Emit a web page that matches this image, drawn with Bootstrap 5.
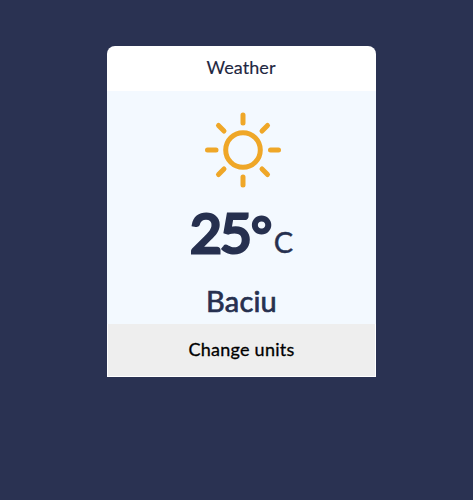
<!DOCTYPE html>
<html lang="en">
<head>
<meta charset="utf-8">
<meta name="viewport" content="width=device-width, initial-scale=1">
<title>Weather</title>
<link href="https://cdn.jsdelivr.net/npm/bootstrap@5.3.0/dist/css/bootstrap.min.css" rel="stylesheet">
<style>
body{background:#2a3252;color:#26304f;font-family:Lato,"Open Sans",sans-serif;min-height:100vh;overflow:hidden}
.weather-card{width:269px;height:331px;margin:46px 0 0 107px;--bs-card-bg:#fff;border-radius:8px 8px 0 0}
.weather-head{height:45px;padding-right:1px;font-size:18px;line-height:43px;letter-spacing:.08px;color:#1f2741;-webkit-text-stroke:.15px #1f2741}
.weather-body{height:233px;background:#f3f9ff}
.sun{width:78px;height:78px;margin:20px 0 0 2px}
.reading{height:66px;margin-top:10px;line-height:66px;white-space:nowrap}
.num{font-size:55px;font-weight:400;letter-spacing:-1.8px;-webkit-text-stroke:3.2px #26304f}
.deg{font-size:51px;font-weight:400;margin-left:1px;-webkit-text-stroke:2.8px #26304f}
.unit{font-size:29px;margin-left:1.5px;-webkit-text-stroke:.4px #26304f}
.city{font-size:29px;line-height:36px;margin-top:18px;letter-spacing:.2px;-webkit-text-stroke:.7px #26304f}
.units-btn{--bs-btn-bg:#eee;--bs-btn-color:#000;height:52px;margin:0 1px 1px;padding:0 0 2px;font-size:18px;letter-spacing:.25px;-webkit-text-stroke:.3px #000;font-family:inherit}
</style>
</head>
<body>
<main class="d-flex align-items-start">
<section class="card weather-card border-0 overflow-hidden flex-shrink-0">
<header class="weather-head text-center">Weather</header>
<div class="weather-body d-flex flex-column align-items-center">
<svg class="sun flex-shrink-0" viewBox="-39 -39 78 78" fill="none" stroke="#efa728" stroke-width="5" stroke-linecap="round" aria-hidden="true">
<circle r="17.3"/>
<path d="M0-35v8M0 27v8M-35.5 0h8.5M27.500 0h8M-24.500-24.500l5.500 5.500M24.500-24.500l-5.500 5.500M-24.500 24.500l5.500-5.500M24.500 24.500l-5.500-5.500"/>
</svg>
<div class="reading"><span class="num">25</span><span class="deg">°</span><span class="unit">C</span></div>
<div class="city">Baciu</div>
</div>
<button class="btn units-btn rounded-0 border-0" type="button">Change units</button>
</section>
</main>
<script src="https://cdn.jsdelivr.net/npm/bootstrap@5.3.0/dist/js/bootstrap.bundle.min.js"></script>
</body>
</html>
